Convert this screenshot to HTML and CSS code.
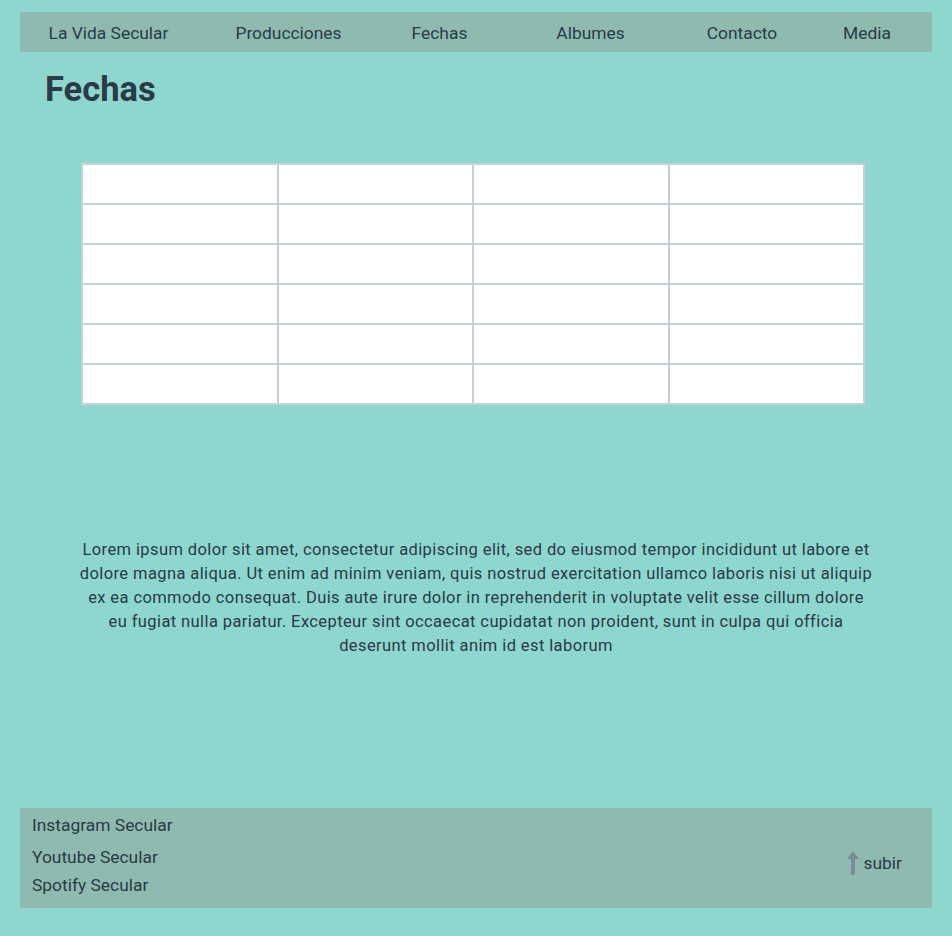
FILE: index.html
```html
<!DOCTYPE html>
<html lang="es">
<head>
<meta charset="utf-8">
<title>Fechas</title>
<link rel="stylesheet" href="styles.css">
</head>
<body>
<nav class="nav">
  <a class="nav-item" href="#">La Vida Secular</a>
  <a class="nav-item" href="#">Producciones</a>
  <a class="nav-item" href="#">Fechas</a>
  <a class="nav-item" href="#">Albumes</a>
  <a class="nav-item" href="#">Contacto</a>
  <a class="nav-item" href="#">Media</a>
</nav>
<main class="main">
  <h1 class="title">Fechas</h1>
  <table class="dates">
    <tr><td></td><td></td><td></td><td></td></tr>
    <tr><td></td><td></td><td></td><td></td></tr>
    <tr><td></td><td></td><td></td><td></td></tr>
    <tr><td></td><td></td><td></td><td></td></tr>
    <tr><td></td><td></td><td></td><td></td></tr>
    <tr><td></td><td></td><td></td><td></td></tr>
  </table>
  <p class="text">Lorem ipsum dolor sit amet, consectetur adipiscing elit, sed do eiusmod tempor incididunt ut labore et dolore magna aliqua. Ut enim ad minim veniam, quis nostrud exercitation ullamco laboris nisi ut aliquip ex ea commodo consequat. Duis aute irure dolor in reprehenderit in voluptate velit esse cillum dolore eu fugiat nulla pariatur. Excepteur sint occaecat cupidatat non proident, sunt in culpa qui officia deserunt mollit anim id est laborum</p>
</main>
<footer class="footer">
  <div class="links">
    <a class="link link-first" href="#">Instagram Secular</a>
    <a class="link" href="#">Youtube Secular</a>
    <a class="link" href="#">Spotify Secular</a>
  </div>
  <a class="up" href="#">
    <svg class="up-icon" width="14" height="26" viewBox="0 0 14 26"><path d="M7 1 L13 9 L9 9 L9 24.5 Q7 26 5 24.5 L5 9 L1 9 Z" fill="#7b8b98"/></svg>
    <span>subir</span>
  </a>
</footer>
</body>
</html>
```
FILE: styles.css
```css
html, body {
  margin: 0;
  padding: 0;
}
body {
  background: #8ed7ce;
  color: #2a3a46;
  font-family: Roboto, "Noto Sans", sans-serif;
  padding: 12px 20px 28px;
}
a {
  color: inherit;
  text-decoration: none;
}
.nav {
  display: grid;
  grid-template-columns: 177px 183px 119px 183px 120px 130px;
  height: 40px;
  align-items: center;
  background: #8fbab0;
  font-size: 17.4px;
}
.nav-item {
  text-align: center;
  padding-top: 1px;
}
.main {
  height: 756px;
  display: flex;
  flex-direction: column;
  align-items: center;
}
.title {
  align-self: flex-start;
  margin: 17px 0 0 25px;
  font-size: 34.5px;
  font-weight: 700;
  line-height: 40px;
}
.dates {
  align-self: flex-start;
  margin: 54px 0 0 61px;
  width: 784px;
  border-collapse: collapse;
  background: #fff;
}
.dates td {
  border: 2px solid #c5d0d9;
  height: 38px;
  padding: 0;
}
.text {
  margin: 133px 0 0;
  width: 796px;
  text-align: center;
  font-size: 16.5px;
  letter-spacing: 0.4px;
  line-height: 24px;
}
.footer {
  height: 100px;
  background: #8fbab0;
  display: flex;
  justify-content: space-between;
  align-items: center;
  font-size: 17.4px;
}
.links {
  display: flex;
  flex-direction: column;
  padding-left: 12px;
  align-self: flex-start;
  padding-top: 3px;
}
.link {
  line-height: 28px;
}
.link-first {
  margin-bottom: 4px;
}
.up {
  display: flex;
  align-items: center;
  gap: 4px;
  margin-right: 30px;
  margin-top: 10px;
}
```
